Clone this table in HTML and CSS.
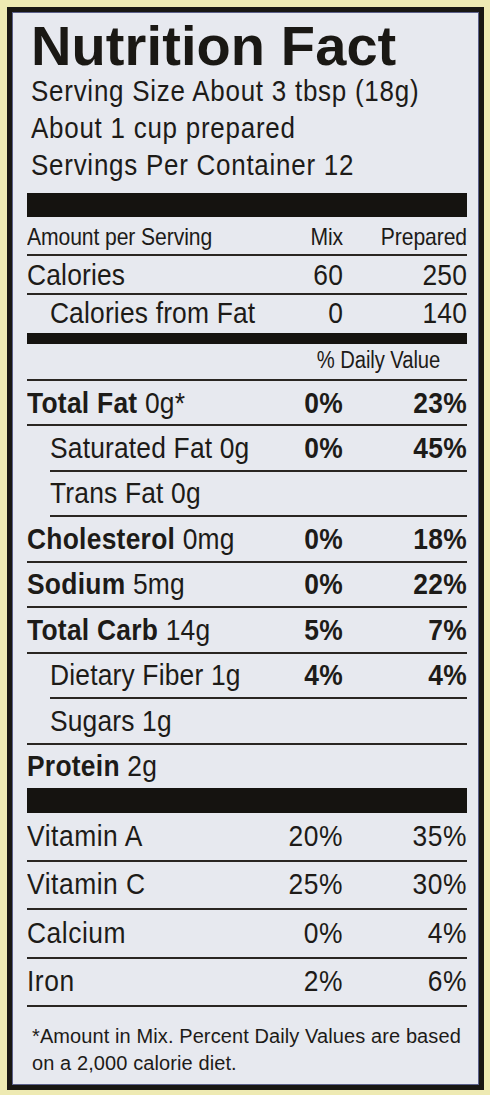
FILE: index.html
```html
<!DOCTYPE html>
<html lang="en">
<head>
<meta charset="utf-8">
<title>Nutrition Facts</title>
<link rel="stylesheet" href="styles.css">
</head>
<body>
<div class="label">
  <div class="head">
    <h1 class="title">Nutrition Fact</h1>
    <p class="sub">Serving Size About 3 tbsp (18g)</p>
    <p class="sub">About 1 cup prepared</p>
    <p class="sub">Servings Per Container 12</p>
  </div>
  <div class="bar bar-lg"></div>
  <div class="row small amount"><span class="lbl">Amount per Serving</span><span class="mix">Mix</span><span class="prep">Prepared</span></div>
  <div class="row cal"><span class="lbl">Calories</span><span class="mix">60</span><span class="prep">250</span></div>
  <div class="row calfat noline"><span class="lbl indent">Calories from Fat</span><span class="mix">0</span><span class="prep">140</span></div>
  <div class="bar bar-md"></div>
  <div class="row small dv"><span class="dvtext">% Daily Value</span></div>
  <div class="row nut"><span class="lbl"><b>Total Fat</b> 0g*</span><span class="mix b">0%</span><span class="prep b">23%</span></div>
  <div class="row nut sub-row"><span class="lbl">Saturated Fat 0g</span><span class="mix b">0%</span><span class="prep b">45%</span></div>
  <div class="row nut sub-row"><span class="lbl">Trans Fat 0g</span></div>
  <div class="row nut"><span class="lbl"><b>Cholesterol</b> 0mg</span><span class="mix b">0%</span><span class="prep b">18%</span></div>
  <div class="row nut"><span class="lbl"><b>Sodium</b> 5mg</span><span class="mix b">0%</span><span class="prep b">22%</span></div>
  <div class="row nut"><span class="lbl"><b>Total Carb</b> 14g</span><span class="mix b">5%</span><span class="prep b">7%</span></div>
  <div class="row nut sub-row"><span class="lbl">Dietary Fiber 1g</span><span class="mix b">4%</span><span class="prep b">4%</span></div>
  <div class="row nut"><span class="lbl indent">Sugars 1g</span></div>
  <div class="row nut noline"><span class="lbl"><b>Protein</b> 2g</span></div>
  <div class="bar bar-lg bar-3"></div>
  <div class="row vit"><span class="lbl">Vitamin A</span><span class="mix">20%</span><span class="prep">35%</span></div>
  <div class="row vit"><span class="lbl">Vitamin C</span><span class="mix">25%</span><span class="prep">30%</span></div>
  <div class="row vit"><span class="lbl">Calcium</span><span class="mix">0%</span><span class="prep">4%</span></div>
  <div class="row vit"><span class="lbl">Iron</span><span class="mix">2%</span><span class="prep">6%</span></div>
  <p class="foot"><span class="foot-line">*Amount in Mix. Percent Daily Values are based</span> <span class="foot-line">on a 2,000 calorie diet.</span></p>
</div>
</body>
</html>
```
FILE: styles.css
```css
html, body {
  margin: 0;
  padding: 0;
}
body {
  background: #eeeab3;
  width: 490px;
  height: 1095px;
  overflow: hidden;
}
.label {
  box-sizing: border-box;
  width: 477px;
  height: 1083px;
  margin: 7px 0 0 7px;
  border: 5px solid #191713;
  background: #e7e9ef;
  box-shadow: inset 0 0 0 1px #5b6089;
  padding: 0 12px 0 15px;
  color: #1d1b18;
  font-family: "Liberation Sans", Arial, sans-serif;
}
.head {
  padding: 7.6px 0 0 4px;
  margin-bottom: 10.4px;
}
.title {
  margin: 0;
  font-weight: 700;
  font-size: 56px;
  line-height: 52px;
  letter-spacing: 0.1px;
  color: #1a1814;
  white-space: nowrap;
}
.sub {
  margin: 0;
  font-size: 29.5px;
  line-height: 37px;
  letter-spacing: 0.85px;
  white-space: nowrap;
  transform: scaleX(0.88);
  transform-origin: left center;
}
.bar {
  background: #151310;
}
.bar-lg {
  height: 24px;
}
.bar-3 {
  height: 25px;
}
.bar-md {
  height: 11px;
}
.row {
  display: flex;
  align-items: flex-end;
  box-sizing: content-box;
  border-bottom: 2px solid #2a2622;
  font-size: 30px;
  line-height: 1;
  letter-spacing: 0.2px;
}
.row.noline {
  border-bottom: none;
}
.row.small {
  font-size: 24px;
  letter-spacing: -0.1px;
}
.amount {
  height: 31.7px;
  padding-bottom: 5.3px;
}
.cal {
  height: 33.6px;
  padding-bottom: 3.4px;
}
.calfat {
  height: 32.6px;
  padding-bottom: 5.4px;
}
.dv {
  height: 27.7px;
  padding-bottom: 7.3px;
  justify-content: flex-end;
}
.dvtext {
  margin-right: 27px;
  font-size: 23px;
  transform: scaleX(0.88);
  transform-origin: right center;
}
.nut {
  height: 36.6px;
  padding-bottom: 6.9px;
}
.vit {
  height: 37.5px;
  padding-bottom: 9px;
  letter-spacing: 0.6px;
}
.lbl {
  flex: 1;
  min-width: 0;
  white-space: nowrap;
  transform: scaleX(0.88);
  transform-origin: left center;
}
.indent {
  padding-left: 26px;
}
.sub-row {
  margin-left: 23px;
}
.mix, .prep {
  flex: none;
  text-align: right;
  white-space: nowrap;
  transform: scaleX(0.88);
  transform-origin: right center;
}
.mix {
  width: 100px;
}
.prep {
  width: 124px;
}
b, .b {
  font-weight: 700;
  letter-spacing: 0.3px;
}
.foot {
  margin: 0;
  padding: 15.6px 0 0 5px;
  font-size: 20px;
  line-height: 27px;
  letter-spacing: 0.1px;
}
.foot-line {
  display: block;
  white-space: nowrap;
}
```
